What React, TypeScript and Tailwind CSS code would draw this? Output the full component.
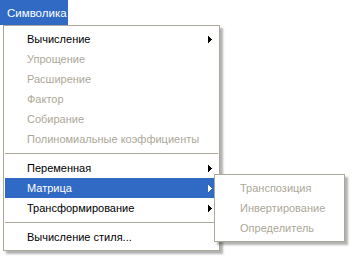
import React from "react";

type Item = {
  label: string;
  disabled?: boolean;
  sub?: boolean;
  active?: boolean;
};

const groups: Item[][] = [
  [
    { label: "Вычисление", sub: true },
    { label: "Упрощение", disabled: true },
    { label: "Расширение", disabled: true },
    { label: "Фактор", disabled: true },
    { label: "Собирание", disabled: true },
    { label: "Полиномиальные коэффициенты", disabled: true },
  ],
  [
    { label: "Переменная", sub: true },
    { label: "Матрица", sub: true, active: true },
    { label: "Трансформирование", sub: true },
  ],
  [{ label: "Вычисление стиля..." }],
];

const matrixItems = ["Транспозиция", "Инвертирование", "Определитель"];

// pixel-style submenu arrow, 4x7
function Arrow({ white }: { white?: boolean }) {
  return (
    <svg width="4" height="7" viewBox="0 0 4 7" shapeRendering="crispEdges">
      <path
        d="M0 0h1v7H0z M1 1h1v5H1z M2 2h1v3H2z M3 3h1v1H3z"
        fill={white ? "#fff" : "#000"}
      />
    </svg>
  );
}

function MenuRow({ item }: { item: Item }) {
  const color = item.active
    ? "bg-[#316ac5] text-white"
    : item.disabled
      ? "text-[#aca899]"
      : "text-black";
  return (
    <div
      className={`relative flex h-[20px] items-center justify-between whitespace-nowrap pl-[22px] pr-[6px] ${color}`}
    >
      <span>{item.label}</span>
      {item.sub && <Arrow white={item.active} />}
      {item.active && (
        <div className="absolute left-[209px] top-[-4px] z-10 w-[131px] border border-[#aca899] bg-white py-[3px] pl-[1px] pr-[3px] shadow-[3px_3px_2px_rgba(0,0,0,0.3)]">
          {matrixItems.map((m) => (
            <div
              key={m}
              className="flex h-[20px] items-center pl-[24px] text-[#aca899]"
            >
              {m}
            </div>
          ))}
        </div>
      )}
    </div>
  );
}

export default function App() {
  return (
    <div
      className="h-[256px] w-[355px] overflow-hidden bg-white text-[11px] leading-none"
      style={{ fontFamily: '"Liberation Sans", Arial, sans-serif' }}
    >
      {/* menu bar */}
      <div className="flex h-[25px] w-[68px] items-center whitespace-nowrap bg-[#316ac5] pl-[7px] pt-[2px] text-[11.5px] text-white">
        Символика
      </div>

      {/* dropdown */}
      <div className="ml-[3px] w-[217px] border border-[#aca899] bg-white px-[1px] py-[3px] shadow-[3px_3px_2px_rgba(0,0,0,0.3)]">
        {groups.map((g, gi) => (
          <div key={gi}>
            {gi > 0 && (
              <div className="flex h-[9px] items-center">
                <div className="h-px w-full bg-[#aca899]" />
              </div>
            )}
            {g.map((it) => (
              <MenuRow key={it.label} item={it} />
            ))}
          </div>
        ))}
      </div>
    </div>
  );
}
